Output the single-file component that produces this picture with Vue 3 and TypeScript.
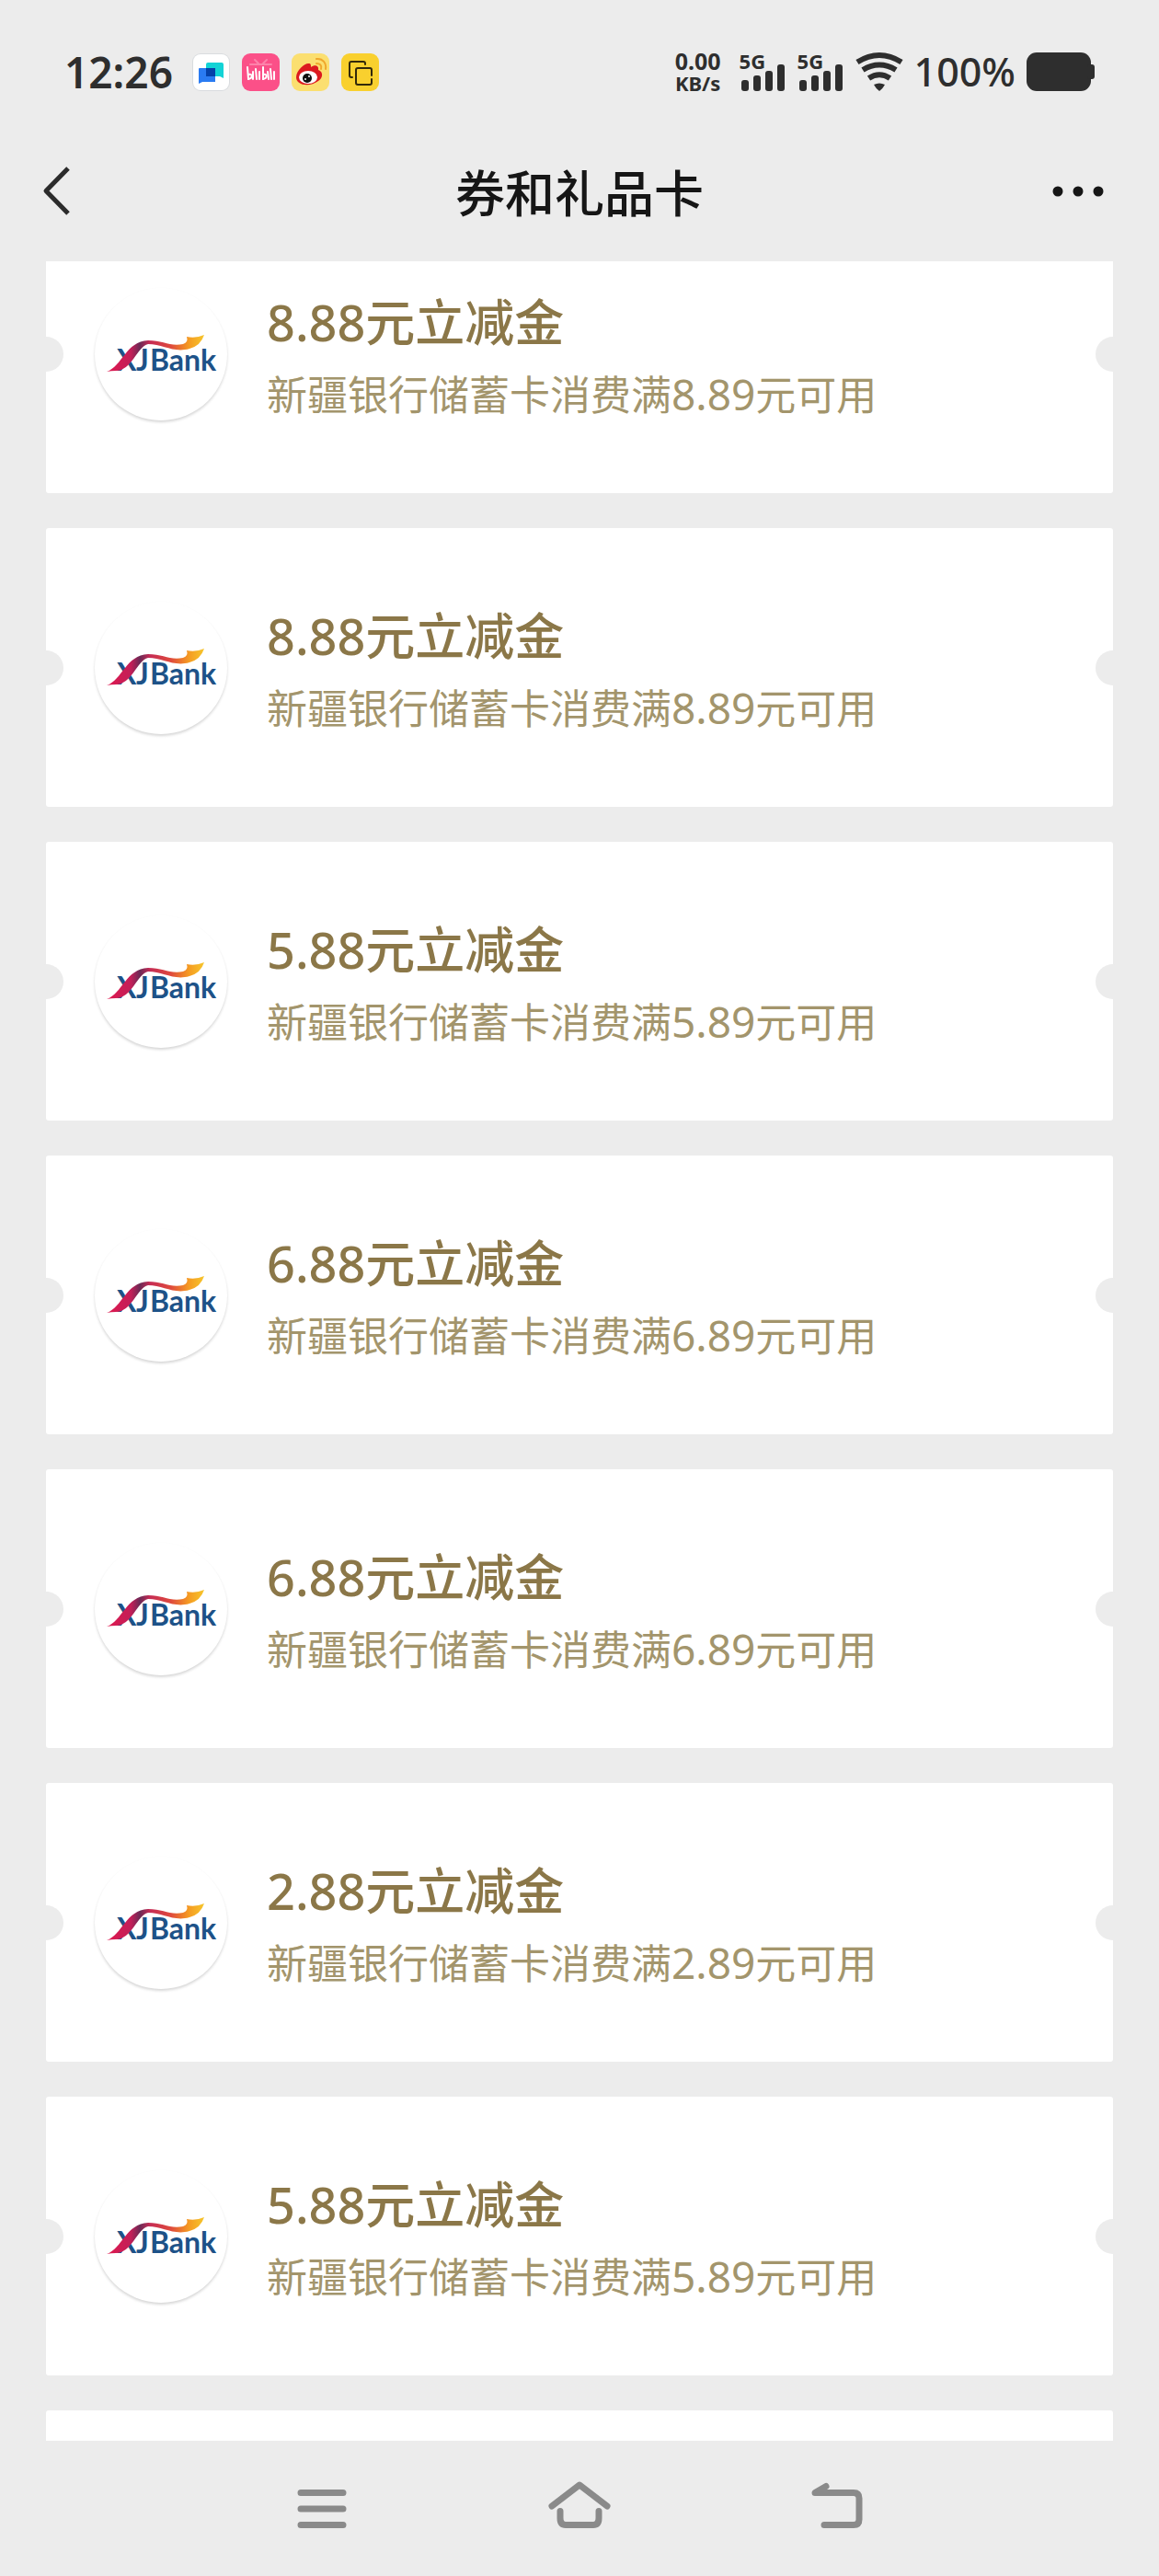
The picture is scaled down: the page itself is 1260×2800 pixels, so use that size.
<script setup lang="ts">
interface Coupon {
  id: number
  amount: string
  threshold: string
}

const coupons: Coupon[] = [
  { id: 1, amount: '8.88', threshold: '8.89' },
  { id: 2, amount: '8.88', threshold: '8.89' },
  { id: 3, amount: '5.88', threshold: '5.89' },
  { id: 4, amount: '6.88', threshold: '6.89' },
  { id: 5, amount: '6.88', threshold: '6.89' },
  { id: 6, amount: '2.88', threshold: '2.89' },
  { id: 7, amount: '5.88', threshold: '5.89' },
]

const simCards: string[] = ['5G', '5G']
</script>

<template>
  <div class="screen">
    <div class="status">
      <div class="status-left">
        <span class="clock">12:26</span>
        <svg class="app-icon" viewBox="0 0 41 41" aria-hidden="true">
          <rect x="0" y="0" width="41" height="41" rx="9" fill="#d9dcdf" />
          <rect x="1" y="1" width="39" height="39" rx="8" fill="#fff" />
          <path d="M17 10h15a2 2 0 0 1 2 2v15l-4-2H15V12a2 2 0 0 1 2-2z" fill="#12d3d6" />
          <path d="M8 16h17v15H11l-4 2V17a1 1 0 0 1 1-1z" fill="#2a7bf2" />
          <path d="M15 16h10v9H15z" fill="#0541a8" />
        </svg>
        <svg class="app-icon" viewBox="0 0 41 41" aria-hidden="true">
          <rect width="41" height="41" rx="9" fill="#fb5088" />
          <path d="M14 7l4 4M27 7l-4 4M9 12h23" stroke="#fd82aa" stroke-width="2" fill="none" stroke-linecap="round" />
          <g stroke="#fff" stroke-width="2" fill="none" stroke-linecap="round">
            <path d="M6 15l1 13M12 20v8M15 17l1 11M19 20v8M23 15v13M28 20l1 8M31 17l1 11M35 20v8" />
            <path d="M7 23c5-1 5 4 0 5M23 23c5-1 5 4 0 5" />
          </g>
        </svg>
        <svg class="app-icon" viewBox="0 0 41 41" aria-hidden="true">
          <rect width="41" height="41" rx="9" fill="#fbdf70" />
          <path d="M5 26c0-8 10-16 14-15 2 0 2 2 2 4 4-3 9-2 8 3 6 2 5 9 0 12-9 7-24 5-24-4z" fill="#dc1a1f" />
          <ellipse cx="18" cy="26" rx="10" ry="7" fill="#fff" />
          <circle cx="17" cy="27" r="5" fill="#111" />
          <circle cx="15" cy="28" r="1" fill="#fff" />
          <circle cx="19" cy="25" r="1" fill="#fff" />
          <path d="M27 6c7-1 11 5 10 11M27 11c4 0 6 2 5 6" stroke="#f0a72c" stroke-width="2" fill="none" stroke-linecap="round" />
        </svg>
        <svg class="app-icon" viewBox="0 0 41 41" aria-hidden="true">
          <rect width="41" height="41" rx="9" fill="#f9d02e" />
          <g fill="none" stroke="#33290a" stroke-width="2" stroke-linecap="round">
            <path d="M12 26h-1a2 2 0 0 1-2-2V11a2 2 0 0 1 2-2h13a2 2 0 0 1 2 2v1" />
            <path d="M33 28v4a2 2 0 0 1-2 2H18a2 2 0 0 1-2-2V18a2 2 0 0 1 2-2h13a2 2 0 0 1 2 2v6" />
          </g>
        </svg>
      </div>
      <div class="status-right">
        <div class="speed">
          <span class="speed-value">0.00</span>
          <span class="speed-unit">KB/s</span>
        </div>
        <div v-for="(sim, i) in simCards" :key="i" class="signal">
          <span class="signal-type">{{ sim }}</span>
          <svg class="signal-bars" viewBox="0 0 49 30" aria-hidden="true">
            <rect x="2" y="18" width="8" height="12" rx="3" />
            <rect x="15" y="13" width="8" height="17" rx="3" />
            <rect x="28" y="8" width="8" height="22" rx="3" />
            <rect x="41" y="1" width="8" height="29" rx="3" />
          </svg>
        </div>
        <svg class="wifi" viewBox="0 0 52 42" aria-hidden="true">
          <g fill="none" stroke="#2e2e2e" stroke-width="6">
            <path d="M2 10.500Q26 -4.500 50 10.500" />
            <path d="M8 19Q26 8 44 19" />
            <path d="M14.500 28Q26 20.500 37.500 28" />
          </g>
          <path d="M20 35q6-3 12 0-2 4-6 7-4-3-6-7z" fill="#2e2e2e" />
        </svg>
        <span class="percent">100%</span>
        <svg class="battery" viewBox="0 0 74 42" aria-hidden="true">
          <rect width="70" height="42" rx="11" />
          <rect x="66" y="13" width="8" height="16" rx="3" />
        </svg>
      </div>
    </div>

    <header class="header">
      <button class="icon-button back" type="button" aria-label="返回">
        <svg width="34" height="60" viewBox="0 0 34 60" aria-hidden="true">
          <path d="M30 5L6 29.500l24 24.500" fill="none" stroke="#2b2b2b" stroke-width="5" stroke-linejoin="round" />
        </svg>
      </button>
      <h1 class="title">券和礼品卡</h1>
      <button class="icon-button more" type="button" aria-label="更多">
        <svg width="56" height="12" viewBox="0 0 56 12" aria-hidden="true">
          <circle cx="6" cy="6" r="5.500" /><circle cx="28" cy="6" r="5.500" /><circle cx="50" cy="6" r="5.500" />
        </svg>
      </button>
    </header>

    <main class="viewport">
      <ul class="list">
        <li v-for="c in coupons" :key="c.id" class="card">
          <div class="avatar">
            <svg class="logo" width="120" height="56" viewBox="0 0 120 56" role="img" aria-label="XJBank">
              <defs>
                <linearGradient :id="'ribbon' + c.id" x1="0" y1="0" x2="1" y2="0">
                  <stop offset="0" stop-color="#e0184f" />
                  <stop offset="0.25" stop-color="#c21f58" />
                  <stop offset="0.34" stop-color="#6b2a55" />
                  <stop offset="0.44" stop-color="#c52b55" />
                  <stop offset="0.66" stop-color="#df4a3c" />
                  <stop offset="0.84" stop-color="#f59a22" />
                  <stop offset="1" stop-color="#f6c62c" />
                </linearGradient>
              </defs>
              <text class="logo-text" y="41"><tspan x="12">X</tspan><tspan x="33">J</tspan><tspan x="48">Bank</tspan></text>
              <path
                d="M1 42C18 36 22 9 46 8C62 8 70 15 84 12Q90 10 88 4Q98 6 107 2Q103 14 91 17C74 22 62 12 46 12C34 15 28 41 11 41Q6 41 1 42z"
                :fill="'url(#ribbon' + c.id + ')'"
              />
            </svg>
          </div>
          <div class="info">
            <h2 class="name"><span class="name-num">{{ c.amount }}</span>元立减金</h2>
            <p class="desc">新疆银行储蓄卡消费满<span class="desc-num">{{ c.threshold }}</span>元可用</p>
          </div>
        </li>
        <li class="card" aria-hidden="true"></li>
      </ul>
    </main>

    <nav class="nav">
      <button class="nav-button" type="button" aria-label="最近任务">
        <svg width="68" height="54" viewBox="0 0 68 54" aria-hidden="true">
          <path d="M11 9.500h46M11 27h46M11 44.500h46" />
        </svg>
      </button>
      <button class="nav-button" type="button" aria-label="主屏幕">
        <svg width="68" height="54" viewBox="0 0 68 54" aria-hidden="true">
          <path d="M4 24L34 1 64 24M13 29.500v7.500q0 7.500 6 7.500h30q6 0 6-7.500v-7.500" />
        </svg>
      </button>
      <button class="nav-button" type="button" aria-label="返回上一级">
        <svg width="68" height="54" viewBox="0 0 68 54" aria-hidden="true">
          <path d="M20 44.500h32q6 0 6-6v-23q0-6-6-6H10l12-7" />
        </svg>
      </button>
    </nav>
  </div>
</template>

<style>
body {
  background: #ececec;
}
</style>

<style scoped>
.screen {
  display: flex;
  flex-direction: column;
  height: 100vh;
  background: #ececec;
  color: #2e2e2e;
  font-family: "Noto Sans CJK SC", sans-serif;
}

button {
  display: flex;
  padding: 0;
  border: 0;
  background: none;
}

svg {
  display: block;
  overflow: visible;
}

.status {
  flex: none;
  display: flex;
  align-items: center;
  justify-content: space-between;
  height: 156px;
  padding: 0 70px;
  box-sizing: border-box;
  font-family: "Noto Sans", sans-serif;
}

.status-left {
  display: flex;
  align-items: center;
  gap: 13px;
}

.clock {
  margin-right: 8px;
  font-size: 46px;
  line-height: 56px;
  font-weight: 600;
}

.app-icon {
  width: 41px;
  height: 41px;
}

.status-right {
  display: flex;
  align-items: center;
  gap: 14px;
}

.speed {
  display: flex;
  flex-direction: column;
  align-items: center;
  margin-right: 6px;
  font-weight: 700;
}

.speed-value {
  font-size: 25px;
  line-height: 24px;
}

.speed-unit {
  font-size: 22px;
  line-height: 24px;
}

.signal {
  display: grid;
  width: 49px;
  height: 42px;
}

.signal-type,
.signal-bars {
  grid-area: 1 / 1;
}

.signal-type {
  font-size: 22px;
  line-height: 18px;
  font-weight: 700;
}

.signal-bars {
  align-self: end;
  width: 49px;
  height: 30px;
  fill: #2e2e2e;
}

.wifi {
  width: 52px;
  height: 42px;
}

.percent {
  margin: 0 -2px;
  font-size: 43px;
  line-height: 52px;
  font-weight: 500;
}

.battery {
  width: 74px;
  height: 42px;
  fill: #2e2e2e;
}

.header {
  flex: none;
  display: flex;
  align-items: center;
  justify-content: space-between;
  height: 104px;
  margin-bottom: 24px;
  padding: 0 44px;
}

.icon-button {
  width: 72px;
}

.more {
  justify-content: flex-end;
  padding-right: 16px;
  box-sizing: border-box;
  fill: #161616;
}

.title {
  margin: 0;
  font-size: 54px;
  line-height: 80px;
  font-weight: 500;
  color: #161616;
}

.viewport {
  flex: 1;
  min-height: 0;
  overflow: hidden;
}

.list {
  display: flex;
  flex-direction: column;
  gap: 38px;
  margin: -51px 50px 0;
  padding: 0;
  list-style: none;
}

.card {
  position: relative;
  display: flex;
  align-items: center;
  gap: 43px;
  height: 303px;
  padding: 0 53px;
  box-sizing: border-box;
  border-radius: 3px;
  background: #fff;
}

.card::before,
.card::after {
  content: "";
  position: absolute;
  top: 133px;
  width: 38px;
  height: 38px;
  border-radius: 50%;
  background: #ececec;
}

.card::before {
  left: -19px;
}

.card::after {
  right: -19px;
}

.avatar {
  flex: none;
  display: flex;
  justify-content: center;
  width: 144px;
  height: 144px;
  padding-top: 49px;
  box-sizing: border-box;
  border-radius: 50%;
  box-shadow: 0 2px 3px rgba(0, 0, 0, 0.16);
}

.logo {
  flex: none;
}

.logo-text {
  font-family: Lato, sans-serif;
  font-size: 32px;
  font-weight: 700;
  fill: #1d5288;
}

.name,
.desc {
  margin: 0;
  white-space: nowrap;
}

.name {
  font-size: 54px;
  line-height: 84px;
  font-weight: 500;
  color: #8b7748;
}

.desc {
  font-size: 44px;
  line-height: 74px;
  color: #a3956c;
}

.name-num,
.desc-num {
  font-family: "Noto Sans", sans-serif;
  line-height: 1;
}

.name-num {
  font-size: 54px;
}

.desc-num {
  font-size: 46px;
}

.nav {
  flex: none;
  display: flex;
  align-items: center;
  justify-content: center;
  gap: 160px;
  height: 147px;
}

.nav-button {
  justify-content: center;
  width: 120px;
}

.nav-button path {
  fill: none;
  stroke: #8a8a8a;
  stroke-width: 7;
  stroke-linecap: round;
  stroke-linejoin: round;
}
</style>
